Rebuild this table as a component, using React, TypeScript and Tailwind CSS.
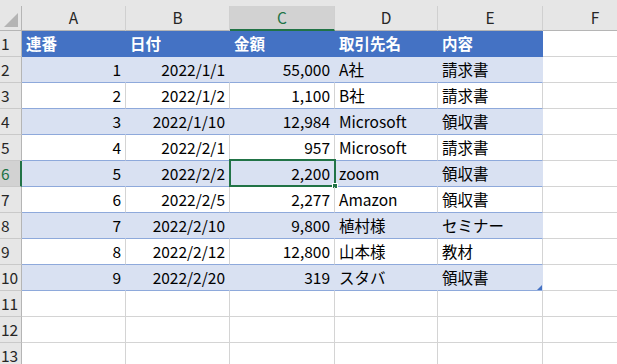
import React from 'react';

type Row = [number, string, string, string, string];

const rows: Row[] = [
  [1, '2022/1/1', '55,000', 'A社', '請求書'],
  [2, '2022/1/2', '1,100', 'B社', '請求書'],
  [3, '2022/1/10', '12,984', 'Microsoft', '領収書'],
  [4, '2022/2/1', '957', 'Microsoft', '請求書'],
  [5, '2022/2/2', '2,200', 'zoom', '領収書'],
  [6, '2022/2/5', '2,277', 'Amazon', '領収書'],
  [7, '2022/2/10', '9,800', '植村様', 'セミナー'],
  [8, '2022/2/12', '12,800', '山本様', '教材'],
  [9, '2022/2/20', '319', 'スタバ', '領収書'],
];

const cols = ['A', 'B', 'C', 'D', 'E'];
const heads = ['連番', '日付', '金額', '取引先名', '内容'];

const gridCols = 'grid grid-cols-[22px_104px_104px_105px_103px_105px_1fr]';

const RowHead = ({ n, active = false }: { n: number; active?: boolean }) => (
  <div
    className={`flex items-center pl-px border-b border-r border-b-[#c9c9c9] ${
      active
        ? 'bg-[#d2d2d2] text-[#217346] border-r-2 border-r-[#217346]'
        : 'bg-[#e6e6e6] text-[#262626] border-r-[#b5b5b5]'
    }`}
  >
    {n}
  </div>
);

export default function App() {
  return (
    <div
      className="w-[617px] h-[364px] overflow-hidden bg-white text-[15.5px] leading-none"
      style={{ fontFamily: '"Noto Sans CJK JP", "Noto Sans", sans-serif' }}
    >
      <div className="h-[6px] bg-[#e6e6e6]" />

      {/* column letters */}
      <div className={`${gridCols} h-[25px] bg-[#e6e6e6] text-[#262626]`}>
        <div className="relative border-r border-b border-[#b5b5b5]">
          <svg className="absolute right-[3px] bottom-[3px]" width="14" height="14" viewBox="0 0 14 14">
            <polygon points="14,0 14,14 0,14" fill="#b4b4b4" />
          </svg>
        </div>
        {cols.map((c) => (
          <div
            key={c}
            className={`flex items-center justify-center border-r border-r-[#d0d0d0] ${
              c === 'C'
                ? 'bg-[#d2d2d2] text-[#217346] border-b-2 border-b-[#217346]'
                : 'border-b border-b-[#b5b5b5]'
            }`}
          >
            {c}
          </div>
        ))}
        <div className="flex items-center border-b border-b-[#b5b5b5]">
          <span className="w-[104px] text-center">F</span>
        </div>
      </div>

      {/* table header */}
      <div className={`${gridCols} h-[26px]`}>
        <RowHead n={1} />
        {heads.map((h) => (
          <div key={h} className="flex items-center px-[4px] bg-[#4472c4] text-white font-bold border-b border-b-[#4472c4]">
            {h}
          </div>
        ))}
        <div className="border-b border-[#d4d4d4]">
          <div className="w-[104px] h-full border-r border-[#d4d4d4]" />
        </div>
      </div>

      {rows.map((r, i) => {
        const band = i % 2 === 0;
        const n = i + 2;
        const cell = `flex items-center px-[4px] border-b border-b-[#8ea9db] border-r ${
          band ? 'bg-[#d9e1f2] border-r-transparent' : 'border-r-[#d4d4d4]'
        }`;
        return (
          <div key={n} className={`${gridCols} h-[26px] text-black`}>
            <RowHead n={n} active={n === 6} />
            <div className={`${cell} justify-end`}>{r[0]}</div>
            <div className={`${cell} justify-end`}>{r[1]}</div>
            <div className={`${cell} justify-end relative`}>
              {r[2]}
              {n === 6 && (
                <div className="absolute -left-px -top-[2px] -right-[2px] -bottom-px border-2 border-[#217346]">
                  <div className="absolute -right-[4px] -bottom-[4px] w-[6px] h-[6px] bg-[#217346] border border-white" />
                </div>
              )}
            </div>
            <div className={cell}>{r[3]}</div>
            <div className={`${cell} relative border-r-[#8ea9db]`}>
              {r[4]}
              {n === 10 && (
                <svg className="absolute right-0 bottom-0" width="5" height="5" viewBox="0 0 5 5">
                  <polygon points="5,0 5,5 0,5" fill="#4472c4" />
                </svg>
              )}
            </div>
            <div className="border-b border-[#d4d4d4]">
              <div className="w-[104px] h-full border-r border-[#d4d4d4]" />
            </div>
          </div>
        );
      })}

      {[11, 12, 13].map((n) => (
        <div key={n} className={`${gridCols} h-[26px]`}>
          <RowHead n={n} />
          {cols.map((c) => (
            <div key={c} className="border-r border-b border-[#d4d4d4]" />
          ))}
          <div className="border-b border-[#d4d4d4]">
            <div className="w-[104px] h-full border-r border-[#d4d4d4]" />
          </div>
        </div>
      ))}
    </div>
  );
}
